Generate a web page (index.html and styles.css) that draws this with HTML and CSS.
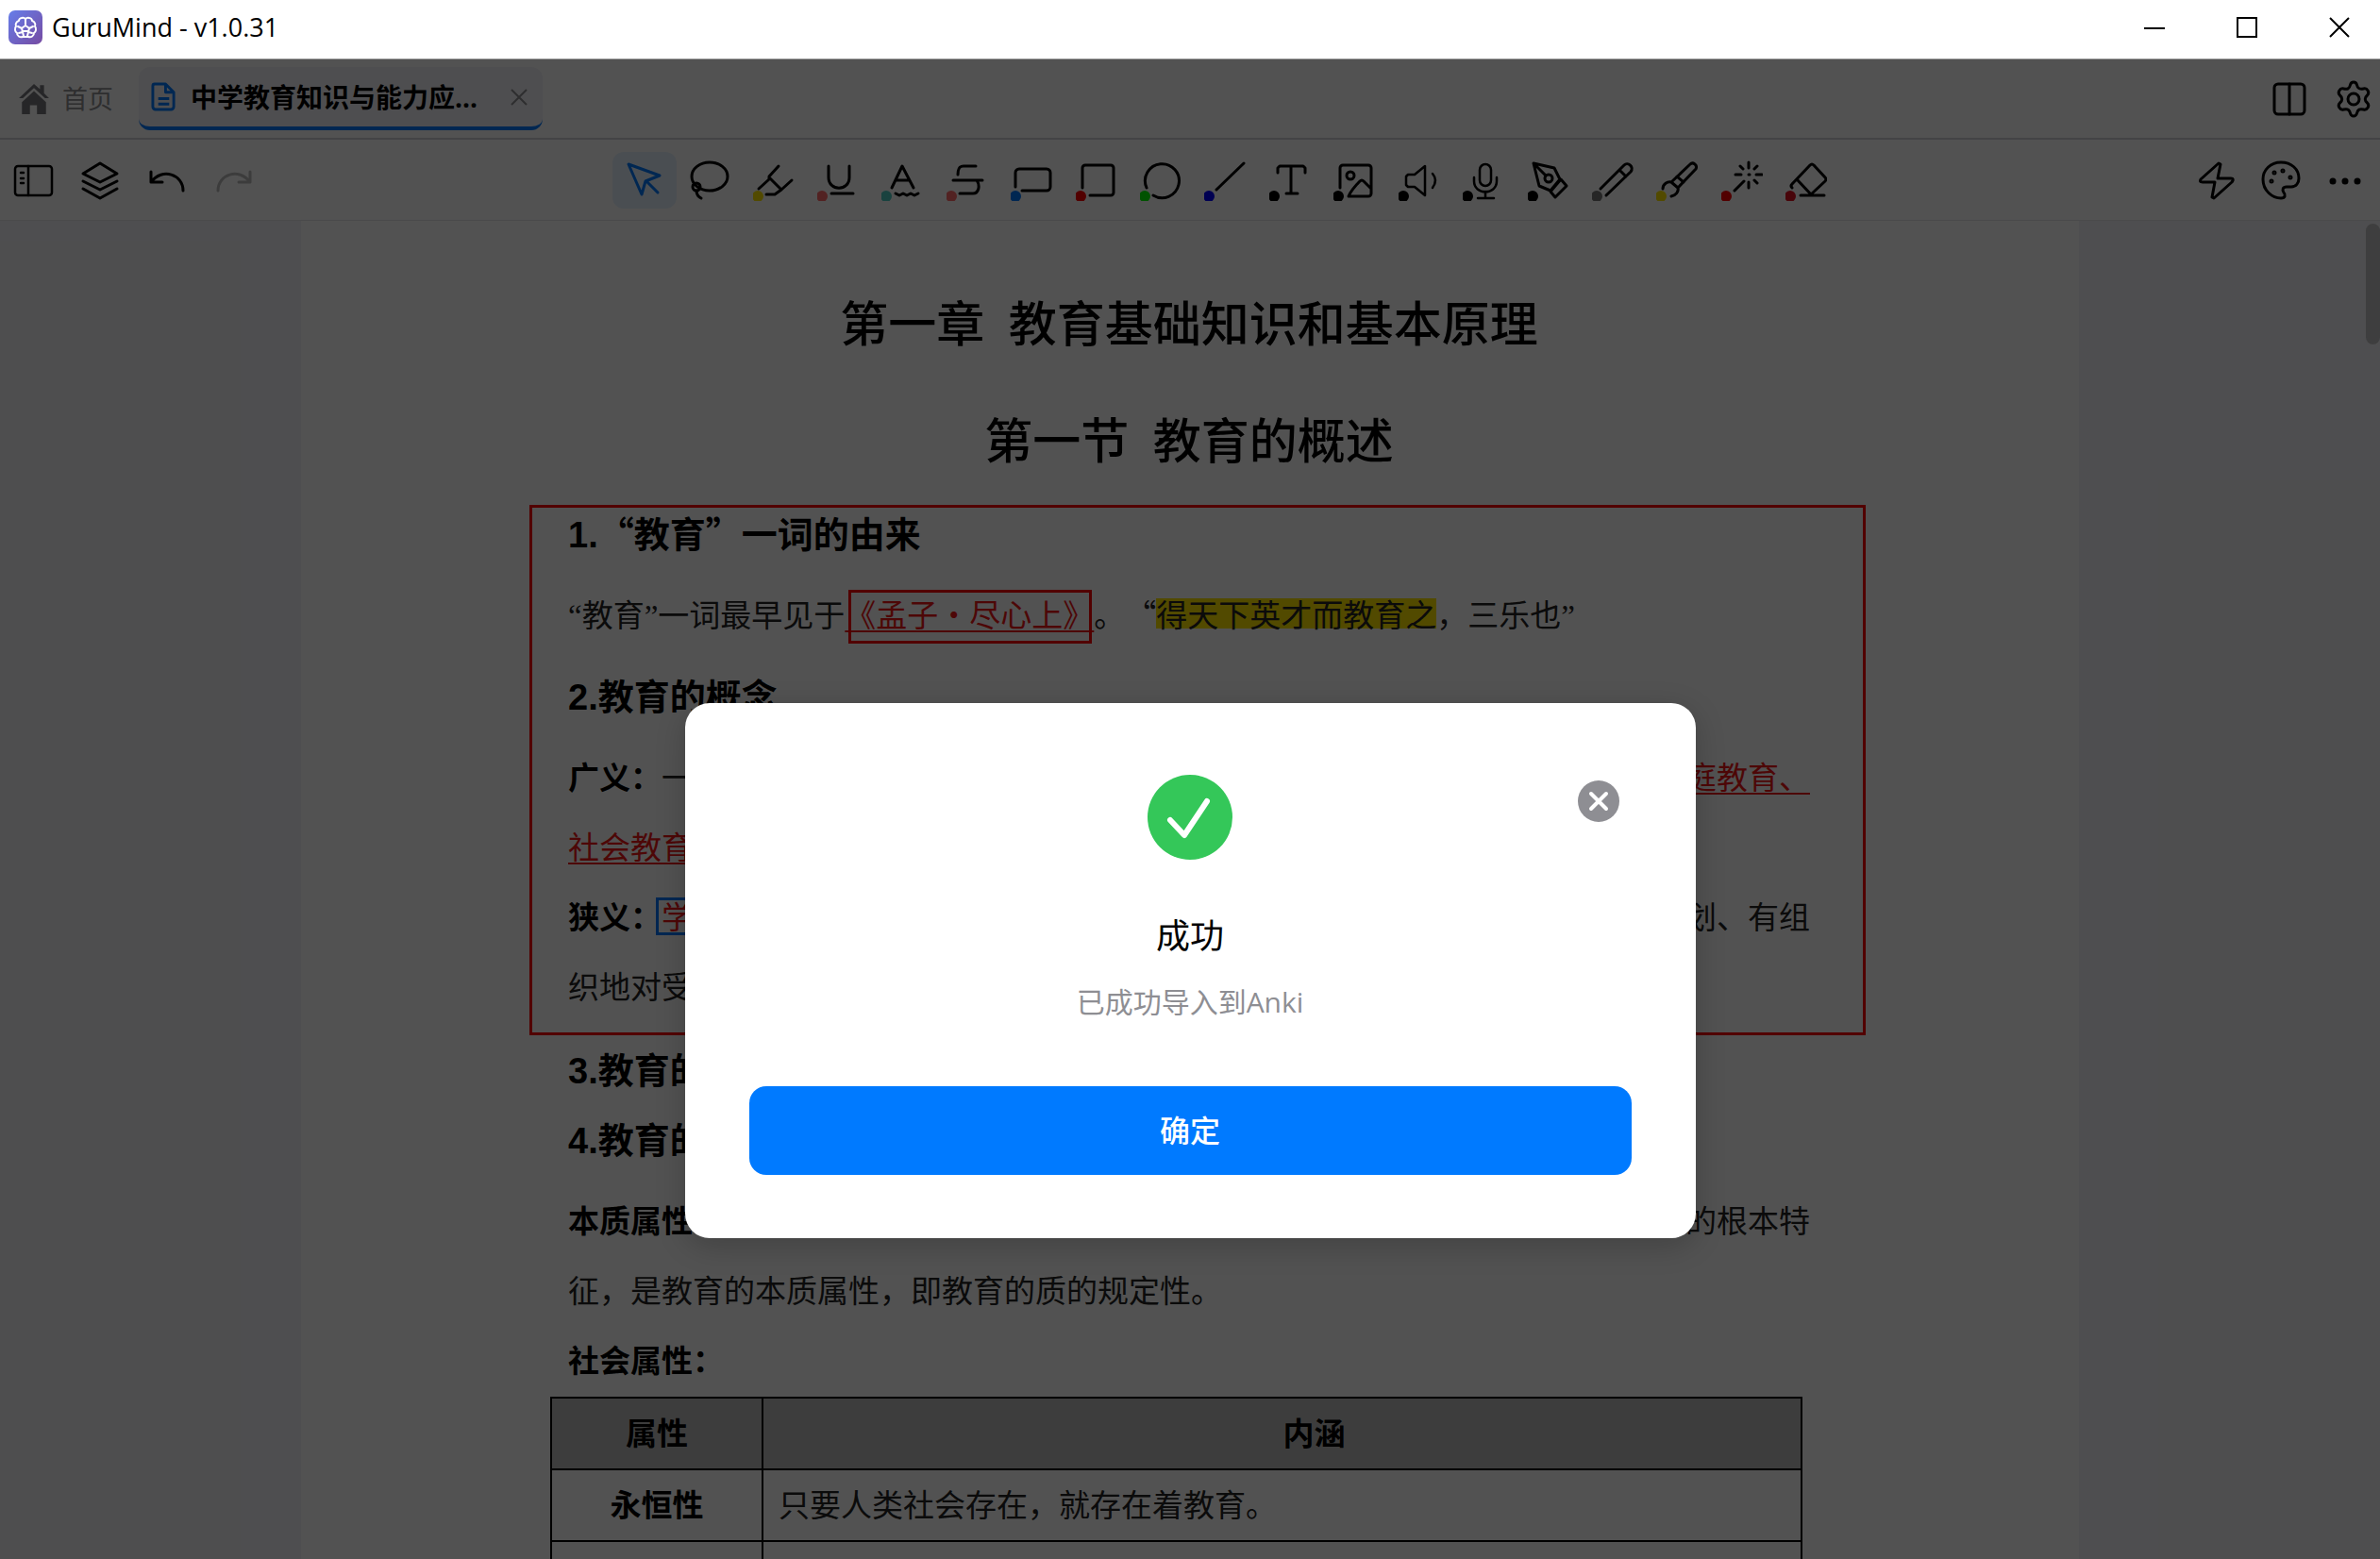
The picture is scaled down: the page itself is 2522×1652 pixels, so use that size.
FILE: index.html
```html
<!DOCTYPE html>
<html lang="zh-CN">
<head>
<meta charset="utf-8">
<title>GuruMind - v1.0.31</title>
<link rel="stylesheet" href="styles.css">
</head>
<body>
<div class="window">
  <header class="titlebar">
    <svg class="logo" viewBox="0 0 36 36">
      <defs><linearGradient id="logoFill" x1="0" y1="0" x2="1" y2="1"><stop offset="0" stop-color="#667eea"/><stop offset="1" stop-color="#764ba2"/></linearGradient></defs>
      <rect width="36" height="36" rx="7" fill="url(#logoFill)"/>
      <g fill="none" stroke="#fff" stroke-width="2" stroke-linecap="round" stroke-linejoin="round">
        <path d="M14 8c-2 0-3 2-3 3-3 1-4 4-3 6-2 2-1 6 1 7 0 3 3 5 6 4h6c3 1 6-1 6-4 2-1 3-5 1-7 1-2 0-5-3-6 0-1-1-3-3-3-2-1-3 0-4 1-1-1-2-2-4-1z"/>
        <path d="M18 9v7M18 16l-4 3M18 16l4 3M14 19l-4-2M22 19l4-2M14 19l2 8M22 19l-2 8M11 24l4-1M25 24l-4-1M16 22h4"/>
      </g>
    </svg>
    <h1 class="app-name">GuruMind - v1.0.31</h1>
    <div class="window-controls">
      <button class="window-button" aria-label="最小化"><svg viewBox="0 0 24 24"><path d="M1 13h22"/></svg></button>
      <button class="window-button" aria-label="最大化"><svg viewBox="0 0 24 24"><path d="M2 2h20v20H2z"/></svg></button>
      <button class="window-button" aria-label="关闭窗口"><svg viewBox="0 0 24 24"><path d="M2 2l20 20M22 2L2 22"/></svg></button>
    </div>
  </header>

  <div class="workspace">
    <nav class="tabbar">
      <a class="home-link" href="#home">
        <svg class="home-icon" viewBox="0 0 32 32"><path d="M16 1L1 15h4L16 5l11 10h4l-5-5V2h-4v4z"/><path d="M16 8L4 19v12h8v-9h7v9h9V19z"/></svg>
        <span>首页</span>
      </a>
      <div class="tab">
        <svg class="file-icon" viewBox="0 0 28 32"><path d="M4 2h12l9 9v16a3 3 0 0 1-3 3H5a3 3 0 0 1-3-3V4a2 2 0 0 1 2-2zM16 2v9h9M8 18h12M8 24h12"/></svg>
        <span class="tab-title">中学教育知识与能力应...</span>
        <button class="tab-close" aria-label="关闭标签"><svg viewBox="0 0 20 20"><path d="M2 2l16 16M18 2L2 18"/></svg></button>
      </div>
      <div class="tab-actions">
        <button class="tool" aria-label="分屏"><svg viewBox="0 0 44 44"><rect x="6" y="6" width="32" height="32" rx="4"/><path d="M22 6v32"/></svg></button>
        <button class="tool" aria-label="设置"><svg viewBox="0 0 44 44"><path d="M18.500 7c1-4 6-4 7 0c1 4 3 5 7 4c4-1 7 4 4 7c-3 2.500-3 5.500 0 8c3 3 0 8-4 7c-4-1-6 0-7 4c-1 4-6 4-7 0c-1-4-3-5-7-4c-4 1-7-4-4-7c3-2.500 3-5.500 0-8c-3-3 0-8 4-7c4 1 6 0 7-4z"/><circle cx="22" cy="22" r="6"/></svg></button>
      </div>
    </nav>

    <div class="toolbar">
      <div class="tool-group">
        <button class="tool tool-fine" aria-label="侧边栏"><svg viewBox="0 0 44 44"><rect x="3" y="7" width="39" height="31" rx="3"/><path d="M17 7v31M9 14h3M9 20h3M9 25h3"/></svg></button>
        <button class="tool" aria-label="图层"><svg viewBox="0 0 44 44"><path d="M22 4l18 11-18 9L4 15zM4 23l18 9 18-9M4 31l18 10 18-10"/></svg></button>
        <button class="tool" aria-label="撤销"><svg viewBox="0 0 44 44"><path d="M5 13v11h12M5 24c12-16 34-8 34 9"/></svg></button>
        <button class="tool tool-off" aria-label="重做" disabled><svg viewBox="0 0 44 44"><path d="M39 13v11H27M39 24C27 8 5 16 5 33"/></svg></button>
      </div>

      <div class="tools">
        <button class="tool tool-active" aria-label="选择"><svg viewBox="0 0 44 44"><path d="M5 5l33 12-15 6-4 14zM24 23l12 12"/></svg></button>
        <button class="tool" aria-label="套索"><svg viewBox="0 0 44 44"><ellipse cx="23" cy="18" rx="19" ry="15"/><circle cx="9" cy="29" r="4"/><path d="M9 33c0 3 1 6 5 8"/></svg></button>
        <button class="tool" aria-label="荧光笔"><svg viewBox="0 0 44 44"><path d="M27 7L17 18v3L6 31M18 20l12 12 11-10M30 32l-7 5h-9"/><circle class="dot dot-yellow" cx="5" cy="39" r="6"/></svg></button>
        <button class="tool" aria-label="下划线"><svg viewBox="0 0 44 44"><path d="M12 7v12c0 15 22 15 22 0V7M15 36h23"/><circle class="dot dot-coral" cx="5" cy="39" r="6"/></svg></button>
        <button class="tool" aria-label="波浪线"><svg viewBox="0 0 44 44"><path d="M11 30L22 7l12 23M15 22h14M15 36l4 2 4-2 4 2 4-2 4 2 4-2"/><circle class="dot dot-teal" cx="5" cy="39" r="6"/></svg></button>
        <button class="tool" aria-label="删除线"><svg viewBox="0 0 44 44"><path d="M31 7H18c-4 0-6 2-6 9M7 22h31M32 22c4 6 2 14-4 14H14"/><circle class="dot dot-coral" cx="5" cy="39" r="6"/></svg></button>
        <button class="tool" aria-label="遮罩"><svg viewBox="0 0 44 44"><path d="M5 29V14a4 4 0 0 1 4-4h29a4 4 0 0 1 4 4v15a4 4 0 0 1-4 4H12"/><circle class="dot dot-blue" cx="5" cy="39" r="6"/></svg></button>
        <button class="tool" aria-label="矩形"><svg viewBox="0 0 44 44"><path d="M7 30V9a3 3 0 0 1 3-3h27a3 3 0 0 1 3 3v26a3 3 0 0 1-3 3H15"/><circle class="dot dot-red" cx="5" cy="39" r="6"/></svg></button>
        <button class="tool" aria-label="圆形"><svg viewBox="0 0 44 44"><path d="M7 30A18 18 0 1 1 14 38"/><circle class="dot dot-green" cx="5" cy="39" r="6"/></svg></button>
        <button class="tool" aria-label="直线"><svg viewBox="0 0 44 44"><path d="M13 32L42 4"/><circle class="dot dot-navy" cx="5" cy="39" r="6"/></svg></button>
        <button class="tool" aria-label="文本"><svg viewBox="0 0 44 44"><path d="M9 14V9l2-2h25l2 2v5M23 7v29M18 36h12"/><circle class="dot" cx="5" cy="39" r="6"/></svg></button>
        <button class="tool" aria-label="图片"><svg viewBox="0 0 44 44"><path d="M7 30V9a3 3 0 0 1 3-3h27a3 3 0 0 1 3 3v27a3 3 0 0 1-3 3H16c3-7 8-12 12-16q2-2 4 0l8 8"/><circle cx="18" cy="17" r="4"/><circle class="dot" cx="5" cy="39" r="6"/></svg></button>
        <button class="tool tool-fine" aria-label="朗读"><svg viewBox="0 0 44 44"><path d="M8 18l2-2h7l11-9v31l-11-9h-7l-2-2zM36 15q6 7 0 15"/><circle class="dot" cx="5" cy="39" r="6"/></svg></button>
        <button class="tool tool-fine" aria-label="录音"><svg viewBox="0 0 44 44"><rect x="18" y="5" width="12" height="23" rx="6"/><path d="M12 19v4c0 15 24 15 24 0v-4M24 34v7M16 41h17"/><circle class="dot" cx="5" cy="39" r="6"/></svg></button>
        <button class="tool" aria-label="钢笔"><svg viewBox="0 0 44 44"><path d="M6 4l22 5 6 12-10 12-12-5zM6 4l13 13M24 34l11-13 6 7-12 12z"/><circle cx="22" cy="20" r="4"/><circle class="dot" cx="5" cy="39" r="6"/></svg></button>
        <button class="tool" aria-label="铅笔"><svg viewBox="0 0 44 44"><path d="M9 31L34 6c4-4 11 2 7 7L15 38M29 11l7 7"/><circle class="dot dot-gray" cx="5" cy="39" r="6"/></svg></button>
        <button class="tool" aria-label="画笔"><svg viewBox="0 0 44 44"><circle class="dot dot-yellow" cx="5" cy="39" r="6"/><path d="M16 24L36 5c3-3 8 1 6 5L23 30zM22 18l7 6M16 24c-4-1-9 2-9 7M23 30c1 4-2 8-7 9"/></svg></button>
        <button class="tool" aria-label="激光笔"><svg viewBox="0 0 44 44"><path d="M14 33l10-10M29 3v6M29 24v6M15 16h6M37 16h6M20 7l3 3M38 7l-3 3M38 25l-3-3M29 16h1"/><circle class="dot dot-red" cx="5" cy="39" r="6"/></svg></button>
        <button class="tool" aria-label="橡皮擦"><svg viewBox="0 0 44 44"><path d="M7 30q-2-2 0-4L26 6q2-2 4 0l12 13q2 2 0 4L27 37 12 21M16 38h25"/><circle class="dot dot-crimson" cx="5" cy="39" r="6"/></svg></button>
      </div>

      <div class="tool-group">
        <button class="tool" aria-label="快捷"><svg viewBox="0 0 44 44"><path d="M24 4L5 21q-2 3 2 3h13l-3 16 2 1 19-17q3-4-1-4H23l3-15z"/></svg></button>
        <button class="tool" aria-label="主题"><svg viewBox="0 0 44 44"><path d="M22 3C11 3 3 11 3 21c0 12 10 20 19 20 5 0 5-4 3-6-2-3-1-6 3-6h5c5 0 8-4 8-9C41 10 33 3 22 3z"/><circle cx="12" cy="23" r="1"/><circle cx="15" cy="14" r="1"/><circle cx="24" cy="12" r="1"/><circle cx="32" cy="19" r="1"/></svg></button>
        <button class="tool" aria-label="更多"><svg viewBox="0 0 44 44"><circle class="dot" cx="9" cy="23" r="3.500"/><circle class="dot" cx="22" cy="23" r="3.500"/><circle class="dot" cx="35" cy="23" r="3.500"/></svg></button>
      </div>
    </div>

    <main class="viewer">
      <article class="page">
        <h2 class="chapter">第一章&ensp;教育基础知识和基本原理</h2>
        <h2 class="chapter">第一节&ensp;教育的概述</h2>
        <section class="marked">
          <h3><span class="num">1.</span>“教育”一词的由来</h3>
          <p><span class="narrow">“</span>教育<span class="narrow">”</span>一词最早见于<span class="key boxed">《孟子・尽心上》<span class="box-red"></span></span>。“<mark>得天下英才而教育之</mark>，三乐也<span class="narrow">”</span></p>
          <h3><span class="num">2.</span>教育的概念</h3>
          <p class="split"><span><b>广义：</b>一切</span><span class="key">家庭教育、</span></p>
          <p><span class="key">社会教育</span></p>
          <p class="split"><span><b>狭义：</b><span class="key boxed">学校<span class="box-blue"></span></span></span><span>划、有组</span></p>
          <p>织地对受</p>
          <div class="section-box"></div>
        </section>
        <h3><span class="num">3.</span>教育的</h3>
        <h3><span class="num">4.</span>教育的</h3>
        <p class="split"><b>本质属性</b><span>的根本特</span></p>
        <p>征，是教育的本质属性，即教育的质的规定性。</p>
        <p><b>社会属性：</b></p>
        <table>
          <thead><tr><th>属性</th><th>内涵</th></tr></thead>
          <tbody>
            <tr><th>永恒性</th><td>只要人类社会存在，就存在着教育。</td></tr>
            <tr><th></th><td></td></tr>
          </tbody>
        </table>
      </article>
      <div class="scroll-thumb"></div>
    </main>

    <div class="overlay">
      <section class="dialog" role="dialog" aria-labelledby="dialogTitle">
        <button class="dialog-close" aria-label="关闭"><svg viewBox="0 0 44 44"><path d="M14 14l16 16M30 14L14 30"/></svg></button>
        <svg class="success" viewBox="0 0 90 90"><circle cx="45" cy="45" r="45"/><path d="M24 48l15 16 24-36"/></svg>
        <h2 class="dialog-title" id="dialogTitle">成功</h2>
        <p class="dialog-text">已成功导入到Anki</p>
        <button class="confirm">确定</button>
      </section>
    </div>
  </div>
</div>
</body>
</html>
```

FILE: styles.css
```css
* { box-sizing: border-box; }

body {
  margin: 0;
  font-family: "Open Sans", "Noto Sans CJK SC", sans-serif;
  color: #000;
}

h1, h2, h3, p { margin: 0; }

button {
  padding: 0;
  border: 0;
  background: none;
  font: inherit;
  color: inherit;
}

svg { display: block; }

.window {
  display: flex;
  flex-direction: column;
  height: 100vh;
  overflow: hidden;
}

/* Title bar */
.titlebar {
  display: flex;
  align-items: center;
  height: 63px;
  flex: none;
  padding: 0 0 4px 9px;
  border-bottom: 1px solid #999;
  background: #fff;
}

.logo { width: 36px; height: 36px; }

.app-name {
  margin-left: 10px;
  font-size: 27px;
  font-weight: 400;
  line-height: 36px;
}

.window-controls {
  display: flex;
  gap: 12px;
  margin-left: auto;
}

.window-button {
  display: grid;
  place-items: center;
  width: 86px;
  height: 56px;
}

.window-button svg {
  width: 24px;
  height: 24px;
  fill: none;
  stroke: #000;
  stroke-width: 2;
}

.workspace {
  position: relative;
  display: flex;
  flex-direction: column;
  flex: 1;
  min-height: 0;
}

/* Tabs */
.tabbar {
  display: flex;
  align-items: center;
  flex: none;
  height: 85px;
  padding: 0 6px 0 19px;
  border-bottom: 2px solid #d1d1d6;
  background: #fff;
}

.home-link {
  display: flex;
  align-items: center;
  gap: 13px;
  width: 128px;
  color: #8e8e93;
  font-size: 27px;
  line-height: 40px;
  text-decoration: none;
}

.home-icon { width: 34px; height: 34px; fill: #77777c; }

.tab {
  display: flex;
  align-items: center;
  width: 428px;
  height: 67px;
  padding: 0 9px 0 13px;
  border-bottom: 4px solid #007aff;
  border-radius: 12px;
  background: #f2f2f7;
}

.file-icon {
  width: 27px;
  height: 31px;
  fill: none;
  stroke: #007aff;
  stroke-width: 3;
  stroke-linejoin: round;
}

.tab-title {
  margin-left: 15px;
  font-size: 28px;
  font-weight: 700;
  line-height: 40px;
}

.tab-close {
  display: grid;
  place-items: center;
  width: 32px;
  height: 32px;
  margin-left: auto;
}

.tab-close svg { width: 20px; height: 20px; stroke: #8e8e93; stroke-width: 2; }

.tab-actions { display: flex; gap: 24px; margin-left: auto; }

/* Toolbar */
.toolbar {
  display: flex;
  align-items: center;
  justify-content: space-between;
  flex: none;
  height: 86px;
  padding: 0 15px 0 13px;
  border-bottom: 1px solid #e5e5ea;
  background: #fff;
}

.tool-group { display: flex; gap: 27px; }
.tool-group:last-child { gap: 24px; }

.tools {
  display: grid;
  grid-template-columns: repeat(19, 1fr);
  width: 1300px;
}

.tool {
  display: grid;
  place-items: center;
  height: 60px;
  border-radius: 12px;
}

.tool svg {
  width: 44px;
  height: 44px;
  fill: none;
  stroke: #000;
  stroke-width: 3;
  stroke-linecap: round;
  stroke-linejoin: round;
}

.tool-fine svg { stroke-width: 2.5; }
.tool-active { background: #e5f2ff; }
.tool-active svg { stroke: #007aff; }
.tool-off svg { stroke: #bbb; }

.tool .dot { fill: #000; stroke: none; }
.tool .dot-yellow { fill: #ffe600; }
.tool .dot-coral { fill: #ff6b6b; }
.tool .dot-teal { fill: #4ecdc4; }
.tool .dot-blue { fill: #007aff; }
.tool .dot-red { fill: #f00; }
.tool .dot-green { fill: #0f0; }
.tool .dot-navy { fill: #00f; }
.tool .dot-gray { fill: #777; }
.tool .dot-crimson { fill: #e01020; }

/* Document */
.viewer {
  position: relative;
  flex: 1;
  min-height: 0;
  overflow: hidden;
  background: #f2f2f7;
}

.page {
  width: 1884px;
  max-width: 100%;
  min-height: 100%;
  margin: 0 auto;
  padding: 44px 285px 0 283px;
  background: #fff;
  font-family: "Noto Sans CJK SC", sans-serif;
  font-size: 33px;
  line-height: 74px;
  text-spacing-trim: space-all;
  color: #222;
}

.chapter {
  font-size: 51px;
  font-weight: 500;
  line-height: 124px;
  text-align: center;
  color: #000;
}

h3 { font-size: 38px; font-weight: 700; color: #000; }

p + h3, h3 + p { margin-top: 12px; }
.marked + h3 { margin-top: 14px; }

.num { font-family: "Liberation Sans", sans-serif; line-height: 1; }
.narrow { font-family: "Liberation Serif", serif; line-height: 1; }

.split { display: flex; justify-content: space-between; }

b { font-weight: 700; color: #000; }

.key {
  color: #f01818;
  text-decoration: underline;
  text-decoration-thickness: 2px;
  text-underline-offset: 4px;
}

mark {
  display: inline-block;
  background: #ffe600;
  color: inherit;
  line-height: 32px;
}

.marked { position: relative; margin-top: 1px; }

/* Annotation frames drawn over the page text */
.section-box {
  position: absolute;
  inset: 8px -59px -16px -41px;
  border: 3px solid #f00;
}

.boxed { position: relative; display: inline-block; }

.box-red {
  position: absolute;
  inset: 12px 2px 5px 4px;
  border: 3px solid #f00;
}

.box-blue {
  position: absolute;
  inset: 18px -6px 16px;
  border: 3px solid #007aff;
}

table {
  width: 1327px;
  margin: 3px 0 0 -19px;
  border-collapse: collapse;
}

th, td {
  height: 76px;
  padding: 0 16px;
  border: 2px solid #000;
  line-height: 70px;
  vertical-align: top;
}
th { width: 224px; color: #000; }
thead th { background: #bfbfbf; }
thead th:last-child { width: auto; padding-left: 84px; }

.scroll-thumb {
  position: absolute;
  top: 3px;
  right: 0;
  width: 15px;
  height: 128px;
  border-radius: 8px;
  background: #c1c1c3;
}

/* Dialog */
.overlay {
  position: absolute;
  inset: 0;
  display: flex;
  align-items: flex-start;
  justify-content: center;
  padding-top: 682px;
  background: rgba(0, 0, 0, 0.68);
}

.dialog {
  position: relative;
  display: flex;
  flex-direction: column;
  align-items: center;
  width: 1071px;
  padding: 76px 68px 67px;
  border-radius: 26px;
  background: #fff;
  box-shadow: 0 8px 32px rgba(0, 0, 0, 0.2);
}

.dialog-close {
  position: absolute;
  top: 82px;
  right: 81px;
}

.dialog-close svg {
  width: 44px;
  height: 44px;
  border-radius: 50%;
  background: #8e8e93;
  stroke: #fff;
  stroke-width: 4;
  stroke-linecap: round;
}

.success { width: 90px; height: 90px; fill: #34c759; }
.success path { fill: none; stroke: #fff; stroke-width: 6; stroke-linecap: round; stroke-linejoin: round; }

.dialog-title {
  margin-top: 51px;
  font-size: 36px;
  font-weight: 400;
  line-height: 60px;
}

.dialog-text {
  margin-top: 18px;
  font-size: 30px;
  line-height: 44px;
  color: #8e8e93;
}

.confirm {
  width: 100%;
  height: 94px;
  margin-top: 67px;
  border-radius: 18px;
  background: #007aff;
  font-size: 32px;
  font-weight: 500;
  line-height: 90px;
  color: #fff;
}
```
